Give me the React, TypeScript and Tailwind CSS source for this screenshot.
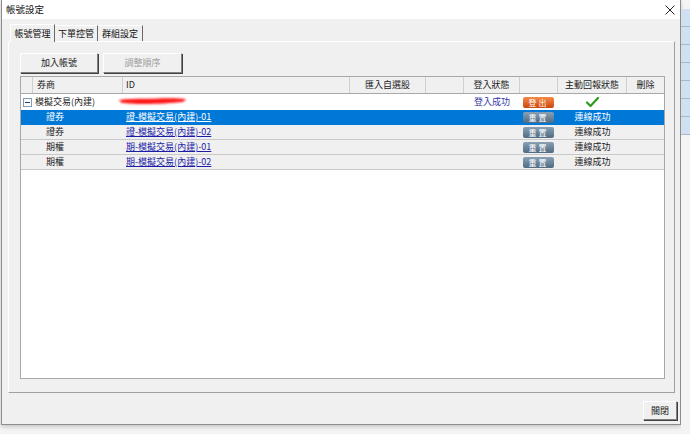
import React from "react";

const cols =
  "grid grid-cols-[12px_90px_227px_76px_38px_56px_38px_69px_37px]";

function Check() {
  return (
    <svg width="13" height="10" viewBox="0 0 13 10">
      <path d="M1 5.5 L4.5 9 L12 1" stroke="#2f9a22" strokeWidth="2.2" fill="none" strokeLinecap="round" strokeLinejoin="round" />
    </svg>
  );
}

function Pill({ label, kind }: { label: string; kind: "orange" | "gray" }) {
  return (
    <div
      className={
        kind === "orange"
          ? "w-[31px] h-[11px] rounded-[2px] bg-gradient-to-b from-[#f58a45] to-[#c9470c] text-white text-[8px] leading-[11px] text-center tracking-[2px]"
          : "w-[31px] h-[11px] rounded-[2px] bg-gradient-to-b from-[#8aa1b5] to-[#4f6a82] text-white text-[8px] leading-[11px] text-center tracking-[2px]"
      }
    >
      {label}
    </div>
  );
}

function SubRow({
  broker,
  id,
  selected,
}: {
  broker: string;
  id: string;
  selected?: boolean;
}) {
  return (
    <div
      className={
        selected
          ? `${cols} h-[15px] bg-[#0078d7] text-white border-b border-[#0078d7]`
          : `${cols} h-[15px] bg-[#f0f0f0] text-[#222] border-b border-[#c8c8c8]`
      }
    >
      <div />
      <div className="pl-[13px] leading-[14px]">{broker}</div>
      <div className="pl-[3px] leading-[14px]">
        <span className={selected ? "underline text-white" : "underline text-[#1c1ca8]"}>{id}</span>
      </div>
      <div />
      <div />
      <div />
      <div className="flex items-center pl-[3px]">
        <Pill label="重置" kind="gray" />
      </div>
      <div className="text-center leading-[14px]">連線成功</div>
      <div />
    </div>
  );
}

function Btn3D({ children, disabled, className }: { children: React.ReactNode; disabled?: boolean; className?: string }) {
  return (
    <div
      className={
        "flex items-center justify-center bg-[#f0f0f0] border-t border-l border-t-white border-l-white border-r border-b border-r-[#808080] border-b-[#808080] shadow-[1px_1px_0_#404040] " +
        (disabled ? "text-[#a0a0a0] " : "text-[#222] ") +
        (className ?? "")
      }
    >
      {children}
    </div>
  );
}

export default function App() {
  return (
    <div
      className="w-[690px] h-[434px] bg-[#f4f4f4] flex overflow-hidden text-[9px]"
      style={{ fontFamily: '"Noto Sans CJK TC", "Noto Sans", sans-serif' }}
    >
      {/* window */}
      <div className="ml-[1px] w-[680px] h-[425px] flex flex-col border-l border-r border-b border-[#8c8c8c] shadow-[0_2px_4px_rgba(0,0,0,0.18)] shrink-0">
        {/* title bar */}
        <div className="h-[19px] bg-white flex items-center justify-between pl-[4px] pr-[4px] shrink-0">
          <span className="text-[9.5px] text-[#111] leading-[19px]">帳號設定</span>
          <svg width="10" height="10" viewBox="0 0 10 10" className="mr-[1px]">
            <path d="M0.5 0.5 L9.5 9.5 M9.5 0.5 L0.5 9.5" stroke="#222" strokeWidth="1" />
          </svg>
        </div>
        {/* body */}
        <div className="flex-1 bg-[#f0f0f0] flex flex-col">
          {/* tabs */}
          <div className="mt-[4px] ml-[8px] h-[18px] flex items-end">
            <div className="h-[18px] w-[45px] border-t border-l border-t-white border-l-white border-r border-r-[#696969] bg-[#f0f0f0] text-center leading-[17px] text-[#111] relative z-10 -mb-[1px]">
              帳號管理
            </div>
            <div className="h-[16px] w-[43px] border-t border-t-white border-r border-r-[#696969] text-center leading-[16px] text-[#111]">
              下單控管
            </div>
            <div className="h-[16px] w-[45px] border-t border-t-white border-r border-r-[#696969] text-center leading-[16px] text-[#111]">
              群組設定
            </div>
          </div>
          {/* panel */}
          <div className="ml-[6px] w-[667px] h-[352px] border-t border-l border-white border-r border-b border-r-[#a0a0a0] border-b-[#a0a0a0] pt-[11px] pl-[11px] flex flex-col">
            <div className="flex gap-[5px] h-[20px]">
              <Btn3D className="w-[78px] h-[20px]">加入帳號</Btn3D>
              <Btn3D disabled className="w-[79px] h-[20px]">調整順序</Btn3D>
            </div>
            {/* grid */}
            <div className="mt-[3px] w-[645px] h-[303px] border border-[#a8a8a8] bg-white flex flex-col">
              <div className={`${cols} h-[17px] bg-[#f0f0f0] border-b border-[#a8a8a8] text-[#222]`}>
                <div className="border-r border-[#d0d0d0]" />
                <div className="border-r border-[#d0d0d0] pl-[4px] leading-[16px]">券商</div>
                <div className="border-r border-[#d0d0d0] pl-[3px] leading-[16px]">ID</div>
                <div className="border-r border-[#d0d0d0] text-center leading-[16px]">匯入自選股</div>
                <div className="border-r border-[#d0d0d0]" />
                <div className="border-r border-[#d0d0d0] text-center leading-[16px]">登入狀態</div>
                <div className="border-r border-[#d0d0d0]" />
                <div className="border-r border-[#d0d0d0] text-center leading-[16px]">主動回報狀態</div>
                <div className="text-center leading-[16px]">刪除</div>
              </div>
              {/* group row */}
              <div className={`${cols} h-[16px] bg-white text-[#222] relative`}>
                <div className="flex items-center pl-[2px]">
                  <div className="w-[9px] h-[9px] border border-[#7f9db9] bg-white flex items-center justify-center">
                    <div className="w-[5px] h-[1px] bg-[#1f3f6f]" />
                  </div>
                </div>
                <div className="pl-[2px] leading-[15px]">模擬交易(內建)</div>
                <div />
                <div />
                <div />
                <div className="text-center leading-[15px] text-[#3434a8]">登入成功</div>
                <div className="flex items-center pl-[3px]">
                  <Pill label="登出" kind="orange" />
                </div>
                <div className="flex items-center justify-center">
                  <Check />
                </div>
                <div />
                <svg className="absolute left-[96px] top-[1px]" width="72" height="13" viewBox="0 0 72 13">
                  <defs>
                    <filter id="blur" x="-10%" y="-50%" width="120%" height="200%">
                      <feGaussianBlur stdDeviation="0.8" />
                    </filter>
                  </defs>
                  <path
                    d="M2 5 C 14 3, 28 4, 42 3.5 S 62 3.5, 69 4 L 66 7 C 55 8, 40 9, 28 9 S 10 8.5, 5 8 Z"
                    fill="#ff1515"
                    filter="url(#blur)"
                  />
                </svg>
              </div>
              <SubRow broker="證券" id="證-模擬交易(內建)-01" selected />
              <SubRow broker="證券" id="證-模擬交易(內建)-02" />
              <SubRow broker="期權" id="期-模擬交易(內建)-01" />
              <SubRow broker="期權" id="期-模擬交易(內建)-02" />
            </div>
          </div>
          {/* footer */}
          <div className="mt-[8px] flex justify-end pr-[3px]">
            <Btn3D className="w-[34px] h-[19px]">關閉</Btn3D>
          </div>
        </div>
      </div>
      {/* background app strip */}
      <div className="flex-1 flex flex-col pt-[9px]">
        <div className="h-[18px] bg-[#cfe0f1] border-b border-[#a8b8c8]" />
        <div className="h-[18px] bg-[#cfe0f1] border-b border-[#a8b8c8]" />
        <div className="h-[18px] bg-[#cfe0f1] border-b border-[#a8b8c8]" />
        <div className="h-[18px] bg-[#cfe0f1] border-b border-[#a8b8c8]" />
        <div className="h-[18px] bg-[#cfe0f1] border-b border-[#a8b8c8]" />
        <div className="h-[18px] bg-[#cfe0f1] border-b border-[#a8b8c8]" />
        <div className="h-[18px] bg-[#cfe0f1] border-b border-[#a8b8c8]" />
        <div className="flex-1 bg-[#f4f4f4]" />
      </div>
    </div>
  );
}
